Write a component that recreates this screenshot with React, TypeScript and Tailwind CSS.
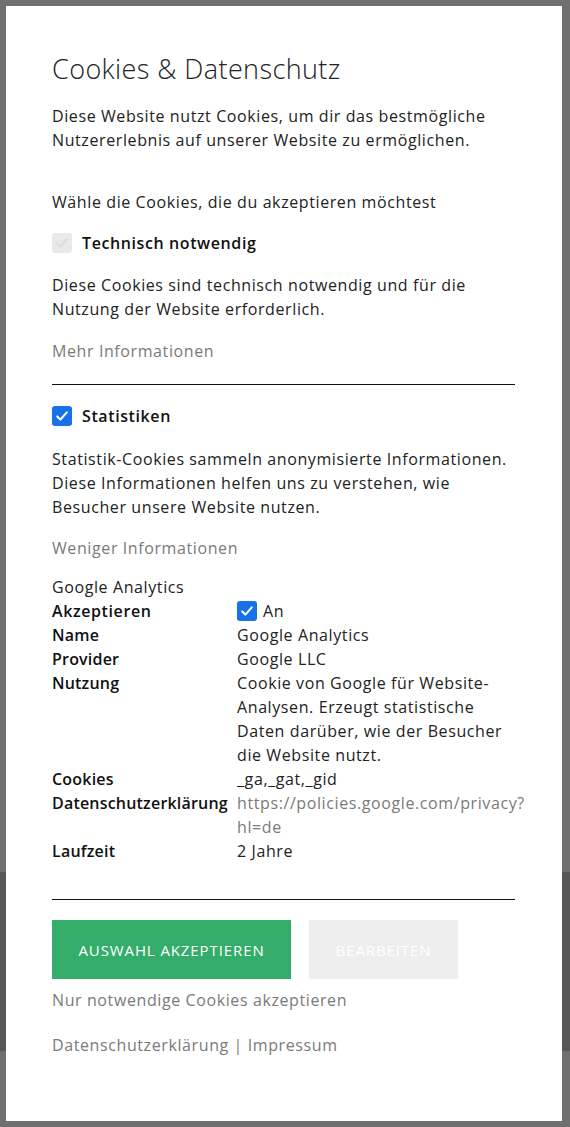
import React from 'react';

const font = { fontFamily: '"Open Sans", Lato, sans-serif' };

function Check({ checked, disabled }: { checked: boolean; disabled?: boolean }) {
  return (
    <span
      className={`flex h-[20px] w-[20px] shrink-0 items-center justify-center rounded-[3px] ${
        disabled ? 'bg-[#e9e9e9]' : 'bg-[#1672e6]'
      }`}
    >
      {checked && (
        <svg viewBox="0 0 20 20" className="h-[16px] w-[16px]">
          <path
            d="M4 10.5l4 4 8-9"
            fill="none"
            stroke={disabled ? '#dcdcdc' : '#ffffff'}
            strokeWidth="2.6"
            strokeLinecap="round"
            strokeLinejoin="round"
          />
        </svg>
      )}
    </span>
  );
}

const rows: [string, React.ReactNode][] = [
  ['Name', 'Google Analytics'],
  ['Provider', 'Google LLC'],
  [
    'Nutzung',
    'Cookie von Google für Website-Analysen. Erzeugt statistische Daten darüber, wie der Besucher die Website nutzt.',
  ],
  ['Cookies', '_ga,_gat,_gid'],
  [
    'Datenschutzerklärung',
    <span className="text-[#7a7a7a]">
      https://policies.google.com/privacy?
      <wbr />
      hl=de
    </span>,
  ],
  ['Laufzeit', '2 Jahre'],
];

export default function App() {
  return (
    <div className="relative h-[1127px] w-[570px] overflow-hidden bg-[#6f6f6f]" style={font}>
      {/* page behind the overlay */}
      <div className="h-[872px]" />
      <div className="h-[179px] bg-[#575757]" />

      <div className="absolute left-[6px] top-[6px] h-[1115px] w-[556px] bg-white pl-[46px] pr-[30px] pt-[47px] text-[16px] leading-[24px] tracking-[0.6px] text-[#222]">
        <h1 className="text-[27px] font-light leading-[32px] tracking-[0.4px] text-[#222]">
          Cookies &amp; Datenschutz
        </h1>

        <div className="w-[470px]">
          <p className="mt-[19px]">
            Diese Website nutzt Cookies, um dir das bestmögliche Nutzererlebnis auf unserer Website zu ermöglichen.
          </p>

          <p className="mt-[38px]">Wähle die Cookies, die du akzeptieren möchtest</p>

          <div className="mt-[17px] flex items-center gap-[10px]">
            <Check checked disabled />
            <span className="font-semibold text-[#111]">Technisch notwendig</span>
          </div>
          <p className="mt-[18px]">
            Diese Cookies sind technisch notwendig und für die Nutzung der Website erforderlich.
          </p>
          <p className="mt-[18px] text-[#7a7a7a]">Mehr Informationen</p>
        </div>

        <hr className="mt-[21px] w-[463px] border-t border-[#111]" />

        <div className="w-[474px]">
          <div className="mt-[19px] flex items-center gap-[10px]">
            <Check checked />
            <span className="font-semibold text-[#111]">Statistiken</span>
          </div>
          <p className="mt-[19px]">
            Statistik-Cookies sammeln anonymisierte Informationen. Diese Informationen helfen uns zu verstehen, wie
            Besucher unsere Website nutzen.
          </p>
          <p className="mt-[17px] text-[#7a7a7a]">Weniger Informationen</p>

          <p className="mt-[15px]">Google Analytics</p>
          <div className="grid grid-cols-[185px_1fr]">
            <span className="font-semibold text-[#111]">Akzeptieren</span>
            <span className="flex items-center gap-[6px]">
              <Check checked />
              An
            </span>
            {rows.map(([label, value]) => (
              <React.Fragment key={label}>
                <span className="whitespace-nowrap font-semibold tracking-[0.2px] text-[#111]">{label}</span>
                <span>{value}</span>
              </React.Fragment>
            ))}
          </div>
        </div>

        <hr className="mt-[36px] w-[463px] border-t border-[#111]" />

        <div className="mt-[20px] flex gap-[18px]">
          <button className="h-[59px] w-[239px] bg-[#33ad69] text-[15px] uppercase tracking-[0.9px] text-white">
            Auswahl akzeptieren
          </button>
          <button className="h-[59px] w-[149px] bg-[#eeeeee] text-[15px] uppercase tracking-[0.9px] text-white">
            Bearbeiten
          </button>
        </div>

        <p className="mt-[9px] text-[#7a7a7a]">Nur notwendige Cookies akzeptieren</p>
        <p className="mt-[21px] text-[#7a7a7a]">Datenschutzerklärung | Impressum</p>
      </div>
    </div>
  );
}
